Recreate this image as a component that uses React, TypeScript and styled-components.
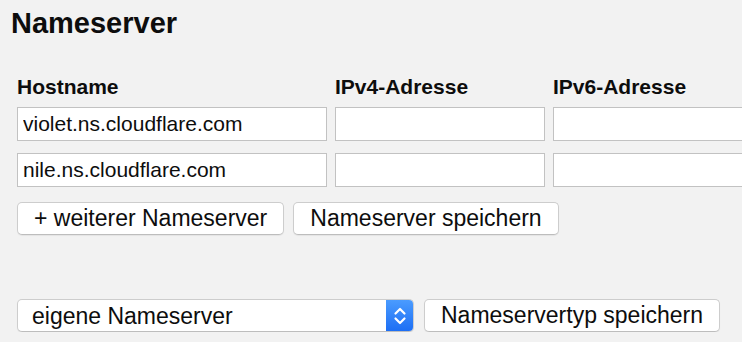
import type { FC } from "react";
import { useState } from "react";
import styled, { createGlobalStyle } from "styled-components";

const GlobalStyle = createGlobalStyle`
  html, body {
    margin: 0;
    padding: 0;
    background: #f2f2f2;
  }
  body {
    font-family: "Liberation Sans", Arial, sans-serif;
    color: #111;
  }
`;

const Page = styled.div`
  padding: 8px 11px 0;
`;

const Title = styled.h2`
  margin: 0;
  font-size: 29px;
  line-height: 30px;
  font-weight: bold;
  color: #0d0d0d;
`;

const Form = styled.form`
  padding: 37px 6px 0;
`;

const Grid = styled.div`
  display: grid;
  grid-template-columns: 310px 210px 210px;
  column-gap: 8px;
  row-gap: 12px;
`;

const ColLabel = styled.label`
  font-size: 21px;
  line-height: 24px;
  font-weight: bold;
  color: #0d0d0d;
  margin-bottom: -4px;
  white-space: nowrap;
`;

const TextInput = styled.input`
  box-sizing: border-box;
  height: 34px;
  width: 100%;
  margin: 0;
  padding: 0 5px;
  border: 1px solid #c2c2c2;
  background: #fff;
  font-family: inherit;
  font-size: 21px;
  color: #0d0d0d;
  outline: none;
`;

const Actions = styled.div<{ $top: number }>`
  display: flex;
  align-items: center;
  gap: 9px;
  margin-top: ${(p) => p.$top}px;
`;

const Button = styled.button`
  box-sizing: border-box;
  height: 33px;
  margin: 0;
  padding: 0 16px;
  border: 1px solid #cdcdcd;
  border-bottom-color: #bdbdbd;
  border-radius: 5px;
  background: #fff;
  box-shadow: 0 1px 1px rgba(0, 0, 0, 0.06);
  font-family: inherit;
  font-size: 23px;
  color: #0d0d0d;
  white-space: nowrap;
  cursor: pointer;
`;

const SelectBox = styled.div`
  box-sizing: border-box;
  display: flex;
  width: 397px;
  height: 33px;
  border: 1px solid #cdcdcd;
  border-bottom-color: #bdbdbd;
  border-radius: 5px;
  background: #fff;
  box-shadow: 0 1px 1px rgba(0, 0, 0, 0.06);
  overflow: hidden;
  margin-right: 1px;
`;

const NativeSelect = styled.select`
  flex: 1;
  min-width: 0;
  appearance: none;
  -webkit-appearance: none;
  border: none;
  margin: 0;
  padding: 0 0 0 14px;
  background: transparent;
  font-family: inherit;
  font-size: 23px;
  color: #0d0d0d;
  outline: none;
`;

const ArrowBox = styled.span`
  display: flex;
  align-items: center;
  justify-content: center;
  width: 28px;
  margin: -1px -1px -1px 0;
  background: linear-gradient(#4c9dff, #1b6df4);
  pointer-events: none;
`;

type Row = { host: string; v4: string; v6: string };

const Arrows: FC = () => (
  <svg width="14" height="22" viewBox="0 0 14 22" fill="none">
    <path d="M2.5 8.5 L7 4 L11.5 8.5" stroke="#fff" strokeWidth="2.2" strokeLinecap="round" strokeLinejoin="round" />
    <path d="M2.5 13.5 L7 18 L11.5 13.5" stroke="#fff" strokeWidth="2.2" strokeLinecap="round" strokeLinejoin="round" />
  </svg>
);

const App: FC = () => {
  const [rows, setRows] = useState<Row[]>([
    { host: "violet.ns.cloudflare.com", v4: "", v6: "" },
    { host: "nile.ns.cloudflare.com", v4: "", v6: "" },
  ]);
  const [kind, setKind] = useState<string>("own");

  const update = (i: number, key: keyof Row, value: string) =>
    setRows((prev) => prev.map((r, j) => (j === i ? { ...r, [key]: value } : r)));

  const addRow = () => setRows((prev) => [...prev, { host: "", v4: "", v6: "" }]);

  return (
    <>
      <GlobalStyle />
      <Page>
        <Title>Nameserver</Title>
        <Form onSubmit={(e) => e.preventDefault()}>
          <Grid>
            <ColLabel>Hostname</ColLabel>
            <ColLabel>IPv4-Adresse</ColLabel>
            <ColLabel>IPv6-Adresse</ColLabel>
            {rows.flatMap((r, i) => [
              <TextInput key={`h${i}`} value={r.host} onChange={(e) => update(i, "host", e.target.value)} />,
              <TextInput key={`4${i}`} value={r.v4} onChange={(e) => update(i, "v4", e.target.value)} />,
              <TextInput key={`6${i}`} value={r.v6} onChange={(e) => update(i, "v6", e.target.value)} />,
            ])}
          </Grid>
          <Actions $top={15}>
            <Button type="button" onClick={addRow}>
              + weiterer Nameserver
            </Button>
            <Button type="submit">Nameserver speichern</Button>
          </Actions>
          <Actions $top={64}>
            <SelectBox>
              <NativeSelect value={kind} onChange={(e) => setKind(e.target.value)}>
                <option value="own">eigene Nameserver</option>
                <option value="default">Standard-Nameserver</option>
              </NativeSelect>
              <ArrowBox>
                <Arrows />
              </ArrowBox>
            </SelectBox>
            <Button type="button">Nameservertyp speichern</Button>
          </Actions>
        </Form>
      </Page>
    </>
  );
};

export default App;
